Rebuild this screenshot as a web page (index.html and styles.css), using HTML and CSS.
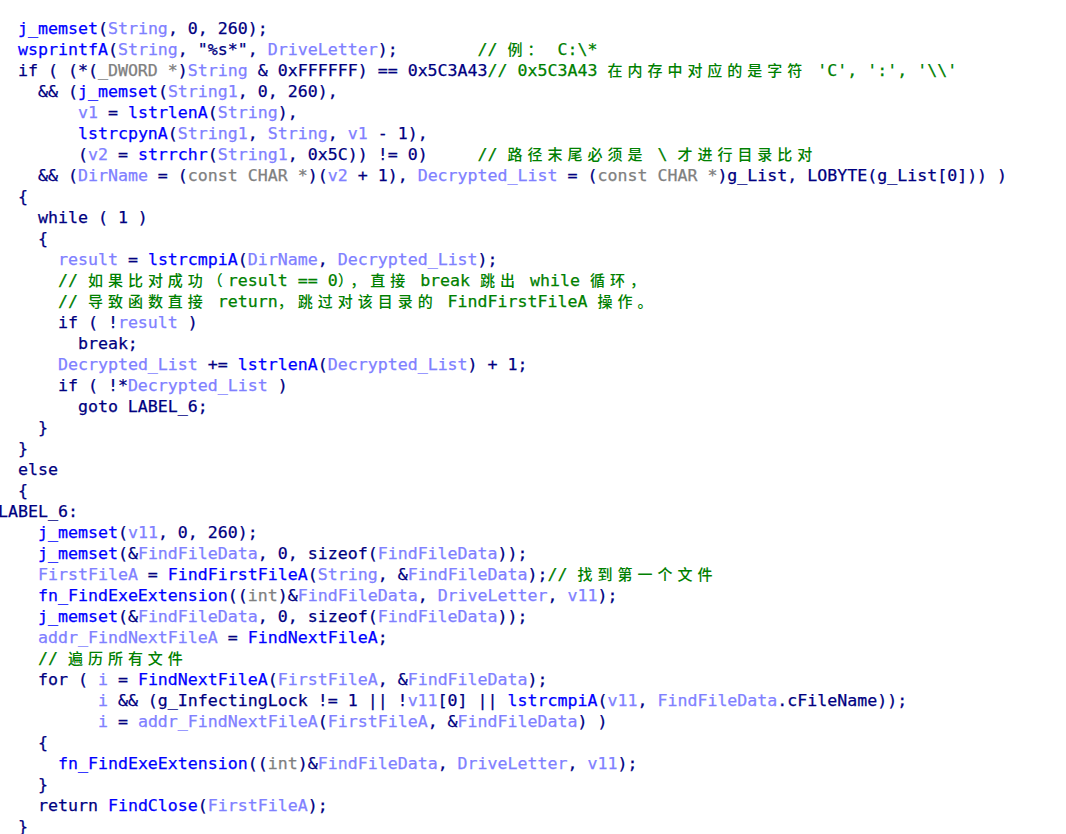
FILE: index.html
```html
<!DOCTYPE html>
<html lang="zh-CN">
<head>
<meta charset="utf-8">
<title>Pseudocode</title>
<link rel="stylesheet" href="styles.css">
</head>
<body>
<pre class="code">  <span class="f">j_memset</span>(<span class="v">String</span>, 0, 260);
  <span class="f">wsprintfA</span>(<span class="v">String</span>, "%s*", <span class="v">DriveLetter</span>);        <span class="c">// <span class="j">例：</span> C:\*</span>
  if ( (*(<span class="t">_DWORD *</span>)<span class="v">String</span> &amp; 0xFFFFFF) == 0x5C3A43<span class="c">// 0x5C3A43 <span class="j">在内存中对应的是字符</span> 'C', ':', '\\'</span>
    &amp;&amp; (<span class="f">j_memset</span>(<span class="v">String1</span>, 0, 260),
        <span class="v">v1</span> = <span class="f">lstrlenA</span>(<span class="v">String</span>),
        <span class="f">lstrcpynA</span>(<span class="v">String1</span>, <span class="v">String</span>, <span class="v">v1</span> - 1),
        (<span class="v">v2</span> = <span class="f">strrchr</span>(<span class="v">String1</span>, 0x5C)) != 0)     <span class="c">// <span class="j">路径末尾必须是</span> \ <span class="j">才进行目录比对</span></span>
    &amp;&amp; (<span class="v">DirName</span> = (<span class="t">const CHAR *</span>)(<span class="v">v2</span> + 1), <span class="v">Decrypted_List</span> = (<span class="t">const CHAR *</span>)g_List, LOBYTE(g_List[0])) )
  {
    while ( 1 )
    {
      <span class="v">result</span> = <span class="f">lstrcmpiA</span>(<span class="v">DirName</span>, <span class="v">Decrypted_List</span>);
      <span class="c">// <span class="j">如果比对成功（</span>result == 0<span class="j">），直接</span> break <span class="j">跳出</span> while <span class="j">循环，</span></span>
      <span class="c">// <span class="j">导致函数直接</span> return<span class="j">，跳过对该目录的</span> FindFirstFileA <span class="j">操作。</span></span>
      if ( !<span class="v">result</span> )
        break;
      <span class="v">Decrypted_List</span> += <span class="f">lstrlenA</span>(<span class="v">Decrypted_List</span>) + 1;
      if ( !*<span class="v">Decrypted_List</span> )
        goto LABEL_6;
    }
  }
  else
  {
LABEL_6:
    <span class="f">j_memset</span>(<span class="v">v11</span>, 0, 260);
    <span class="f">j_memset</span>(&amp;<span class="v">FindFileData</span>, 0, sizeof(<span class="v">FindFileData</span>));
    <span class="v">FirstFileA</span> = <span class="f">FindFirstFileA</span>(<span class="v">String</span>, &amp;<span class="v">FindFileData</span>);<span class="c">// <span class="j">找到第一个文件</span></span>
    <span class="f">fn_FindExeExtension</span>((<span class="t">int</span>)&amp;<span class="v">FindFileData</span>, <span class="v">DriveLetter</span>, <span class="v">v11</span>);
    <span class="f">j_memset</span>(&amp;<span class="v">FindFileData</span>, 0, sizeof(<span class="v">FindFileData</span>));
    <span class="v">addr_FindNextFileA</span> = <span class="f">FindNextFileA</span>;
    <span class="c">// <span class="j">遍历所有文件</span></span>
    for ( <span class="v">i</span> = <span class="f">FindNextFileA</span>(<span class="v">FirstFileA</span>, &amp;<span class="v">FindFileData</span>);
          <span class="v">i</span> &amp;&amp; (g_InfectingLock != 1 || !<span class="v">v11</span>[0] || <span class="f">lstrcmpiA</span>(<span class="v">v11</span>, <span class="v">FindFileData</span>.cFileName));
          <span class="v">i</span> = <span class="v">addr_FindNextFileA</span>(<span class="v">FirstFileA</span>, &amp;<span class="v">FindFileData</span>) )
    {
      <span class="f">fn_FindExeExtension</span>((<span class="t">int</span>)&amp;<span class="v">FindFileData</span>, <span class="v">DriveLetter</span>, <span class="v">v11</span>);
    }
    return <span class="f">FindClose</span>(<span class="v">FirstFileA</span>);
  }
</pre>
</body>
</html>
```
FILE: styles.css
```css
html, body {
  margin: 0;
  padding: 0;
  background: #ffffff;
}

.code {
  margin: 0 0 0 -2px;
  padding: 18px 0 0 0;
  font-family: "DejaVu Sans Mono", "Liberation Mono", monospace;
  font-size: 16.6px;
  line-height: 21px;
  color: #000080;
  white-space: pre;
  -webkit-text-stroke: 0.25px currentColor;
}

.f { color: #0000ff; }
.v { color: #8080ff; }
.t { color: #808080; }
.c { color: #008000; }

.j {
  font-family: "Noto Sans CJK SC", sans-serif;
  font-size: 15px;
  line-height: 0;
  letter-spacing: 4.98px;
  -webkit-text-stroke: 0;
  font-weight: 500;
}
```
